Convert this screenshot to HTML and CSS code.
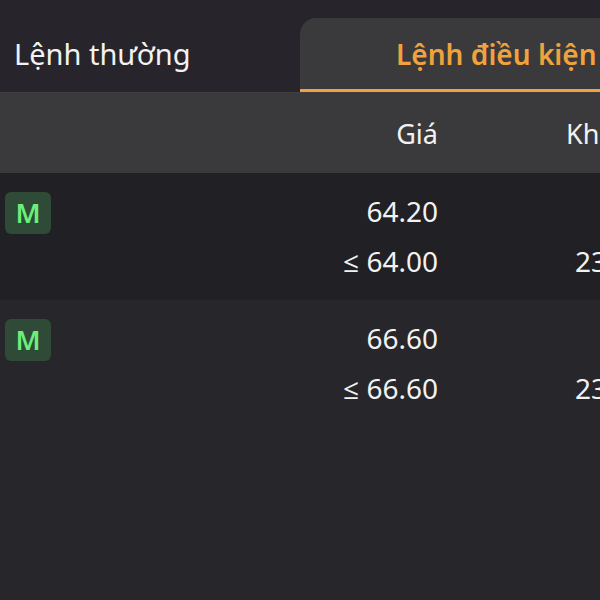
FILE: index.html
```html
<!DOCTYPE html>
<html lang="vi">
<head>
  <meta charset="UTF-8" />
  <title>Lệnh điều kiện</title>
  <link rel="stylesheet" href="styles.css">
</head>
<body>

<div class="tabs">
  <div class="tab">Lệnh thường</div>
  <div class="tab active">Lệnh điều kiện</div>
</div>

<div class="head">
  <div></div>
  <div class="price">Giá</div>
  <div class="qty">Khối lượng</div>
</div>

<div class="order odd">
  <div class="badge">M</div>
  <div class="lines">
    <div class="line"><span class="price">64.20</span><span class="qty"></span></div>
    <div class="line"><span class="price">≤ 64.00</span><span class="qty">2300</span></div>
  </div>
</div>

<div class="order">
  <div class="badge">M</div>
  <div class="lines">
    <div class="line"><span class="price">66.60</span><span class="qty"></span></div>
    <div class="line"><span class="price">≤ 66.60</span><span class="qty">2300</span></div>
  </div>
</div>

</body>
</html>
```

FILE: styles.css
```css
html, body {
  margin: 0;
  padding: 0;
  height: 100%;
}

body {
  font-family: "Noto Sans", "Open Sans", sans-serif;
  background: #27262b;
  color: #f2f2f2;
  width: 600px;
  overflow: hidden;
}

.tabs {
  display: flex;
  align-items: flex-end;
  height: 93px;
  background: #27252b;
  padding-top: 18px;
  box-sizing: border-box;
  border-bottom: 1px solid #3f3f42;
}

.tab {
  width: 300px;
  flex: none;
  font-size: 29px;
  padding-left: 14px;
  height: 74px;
  line-height: 72px;
  box-sizing: border-box;
}

.tab.active {
  background: #3a3a3d;
  color: #f0a23c;
  font-size: 28px;
  font-weight: 600;
  border-top-left-radius: 16px;
  border-bottom: 3px solid #f0a23c;
  padding-left: 96px;
  white-space: nowrap;
  overflow: hidden;
}

.head {
  display: grid;
  grid-template-columns: 60px 378px 1fr;
  align-items: center;
  height: 80px;
  background: #3a3a3c;
  font-size: 27px;
  white-space: nowrap;
  overflow: hidden;
}

.price {
  text-align: right;
}

.qty {
  padding-left: 128px;
  white-space: nowrap;
}

.order {
  display: flex;
  align-items: flex-start;
  height: 127px;
  padding-top: 17px;
  box-sizing: border-box;
}

.order.odd {
  background: #212024;
}

.badge {
  width: 46px;
  height: 42px;
  margin-left: 5px;
  margin-top: 2px;
  flex: none;
  background: #2f4a36;
  color: #6cee7a;
  border-radius: 6px;
  font-size: 27px;
  font-weight: 600;
  text-align: center;
  line-height: 42px;
}

.lines {
  display: grid;
  grid-template-columns: 387px 1fr;
  width: 549px;
  font-size: 28px;
  white-space: nowrap;
}

.line {
  display: contents;
}

.line span {
  height: 50px;
  line-height: 42px;
}

.lines .qty {
  padding-left: 137px;
}
```
